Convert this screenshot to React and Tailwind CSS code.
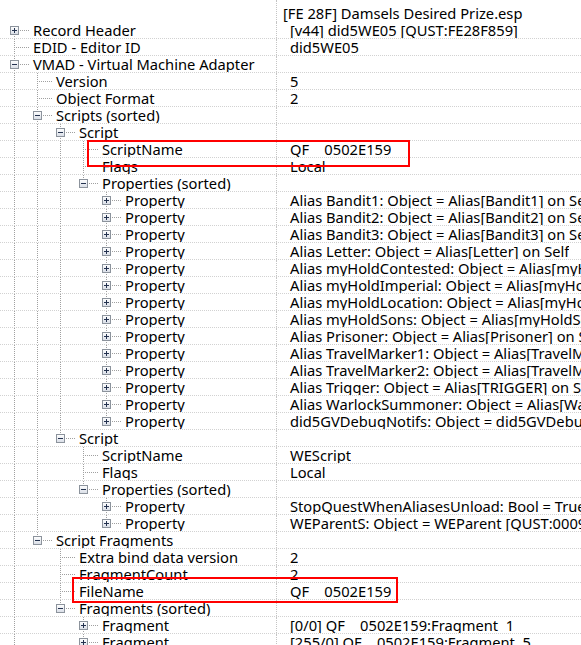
import React from 'react';

const INDENT = 23;
const ROW_H = 17;

const rawRows = [
  { level: 0, exp: '+', name: 'Record Header', value: '[v44] did5WE05 [QUST:FE28F859]' },
  { level: 0, name: 'EDID - Editor ID', value: 'did5WE05' },
  { level: 0, exp: '-', name: 'VMAD - Virtual Machine Adapter', value: '', more: true },
  { level: 1, name: 'Version', value: '5' },
  { level: 1, name: 'Object Format', value: '2' },
  { level: 1, exp: '-', name: 'Scripts (sorted)', value: '' },
  { level: 2, exp: '-', name: 'Script', value: '' },
  { level: 3, name: 'ScriptName', value: 'QF    0502E159' },
  { level: 3, name: 'Flags', value: 'Local' },
  { level: 3, exp: '-', name: 'Properties (sorted)', value: '' },
  { level: 4, exp: '+', name: 'Property', value: 'Alias Bandit1: Object = Alias[Bandit1] on Self' },
  { level: 4, exp: '+', name: 'Property', value: 'Alias Bandit2: Object = Alias[Bandit2] on Self' },
  { level: 4, exp: '+', name: 'Property', value: 'Alias Bandit3: Object = Alias[Bandit3] on Self' },
  { level: 4, exp: '+', name: 'Property', value: 'Alias Letter: Object = Alias[Letter] on Self' },
  { level: 4, exp: '+', name: 'Property', value: 'Alias myHoldContested: Object = Alias[myHoldContested] on Self' },
  { level: 4, exp: '+', name: 'Property', value: 'Alias myHoldImperial: Object = Alias[myHoldImperial] on Self' },
  { level: 4, exp: '+', name: 'Property', value: 'Alias myHoldLocation: Object = Alias[myHoldLocation] on Self' },
  { level: 4, exp: '+', name: 'Property', value: 'Alias myHoldSons: Object = Alias[myHoldSons] on Self' },
  { level: 4, exp: '+', name: 'Property', value: 'Alias Prisoner: Object = Alias[Prisoner] on Self' },
  { level: 4, exp: '+', name: 'Property', value: 'Alias TravelMarker1: Object = Alias[TravelMarker1] on Self' },
  { level: 4, exp: '+', name: 'Property', value: 'Alias TravelMarker2: Object = Alias[TravelMarker2] on Self' },
  { level: 4, exp: '+', name: 'Property', value: 'Alias Trigger: Object = Alias[TRIGGER] on Self' },
  { level: 4, exp: '+', name: 'Property', value: 'Alias WarlockSummoner: Object = Alias[WarlockSummoner] on Self' },
  { level: 4, exp: '+', name: 'Property', value: 'did5GVDebugNotifs: Object = did5GVDebugNotifs [GLOB:FE28F800]' },
  { level: 2, exp: '-', name: 'Script', value: '' },
  { level: 3, name: 'ScriptName', value: 'WEScript' },
  { level: 3, name: 'Flags', value: 'Local' },
  { level: 3, exp: '-', name: 'Properties (sorted)', value: '' },
  { level: 4, exp: '+', name: 'Property', value: 'StopQuestWhenAliasesUnload: Bool = True' },
  { level: 4, exp: '+', name: 'Property', value: 'WEParentS: Object = WEParent [QUST:0009E4AE]' },
  { level: 1, exp: '-', name: 'Script Fragments', value: '' },
  { level: 2, name: 'Extra bind data version', value: '2' },
  { level: 2, name: 'FragmentCount', value: '2' },
  { level: 2, name: 'FileName', value: 'QF    0502E159' },
  { level: 2, exp: '-', name: 'Fragments (sorted)', value: '' },
  { level: 3, exp: '+', name: 'Fragment', value: '[0/0] QF    0502E159:Fragment  1' },
  { level: 3, exp: '+', name: 'Fragment', value: '[255/0] QF    0502E159:Fragment  5' },
];

// work out which nodes have a sibling further down, and which ancestor lines run through each row
const rows = rawRows.map((r, i) => {
  let next = false;
  for (let j = i + 1; j < rawRows.length; j++) {
    if (rawRows[j].level < r.level) break;
    if (rawRows[j].level === r.level) {
      next = true;
      break;
    }
  }
  return { ...r, hasNext: !!r.more || next };
});

rows.forEach((r, i) => {
  const through = [];
  for (let k = 0; k < r.level; k++) {
    let anc = null;
    for (let j = i - 1; j >= 0; j--) {
      if (rows[j].level === k) {
        anc = rows[j];
        break;
      }
    }
    through.push(anc ? anc.hasNext : false);
  }
  r.through = through;
});

const cx = (level) => 14 + INDENT * level;

const TreeLines = ({ row, first }) => {
  const h = ROW_H - 1;
  const mid = 8;
  const width = 31 + INDENT * row.level;
  const c = cx(row.level);
  const line = { stroke: '#a0a0a0', strokeDasharray: '1 1', shapeRendering: 'crispEdges' };

  return (
    <svg width={width} height={h} className="shrink-0 block">
      {row.through.map((on, k) =>
        on ? <line key={k} x1={cx(k) + 0.5} y1={0} x2={cx(k) + 0.5} y2={h} {...line} /> : null
      )}
      <line x1={c + 0.5} y1={first ? mid : 0} x2={c + 0.5} y2={row.hasNext ? h : mid} {...line} />
      <line x1={c} y1={mid + 0.5} x2={width - 1} y2={mid + 0.5} {...line} />
      {row.exp && (
        <g shapeRendering="crispEdges">
          <defs>
            <linearGradient id="boxfill" x1="0" y1="0" x2="0" y2="1">
              <stop offset="0" stopColor="#ffffff" />
              <stop offset="1" stopColor="#d8dde6" />
            </linearGradient>
          </defs>
          <rect x={c - 4 + 0.5} y={mid - 4 + 0.5} width={8} height={8} fill="url(#boxfill)" stroke="#8c939c" />
          <line x1={c - 2} y1={mid + 0.5} x2={c + 3} y2={mid + 0.5} stroke="#24324f" />
          {row.exp === '+' && <line x1={c + 0.5} y1={mid - 2} x2={c + 0.5} y2={mid + 3} stroke="#24324f" />}
        </g>
      )}
    </svg>
  );
};

const App = () => {
  return (
    <div
      className="relative w-[581px] h-[645px] overflow-hidden bg-white text-[14.7px] text-black"
      style={{ fontFamily: '"Noto Sans", "Open Sans", sans-serif' }}
    >
      {/* header row */}
      <div className="flex h-[22px]">
        <div className="w-[277px] shrink-0 border-r border-dotted border-[#c4c4c4]" />
        <div className="pl-[6px] pt-[3px] leading-[20px] whitespace-nowrap">[FE 28F] Damsels Desired Prize.esp</div>
      </div>

      {rows.map((row, i) => (
        <div key={i} className="flex h-[17px] border-b border-dotted border-[#d2d2d2]">
          <div className="w-[277px] shrink-0 flex items-start border-r border-dotted border-[#c4c4c4] overflow-hidden">
            <TreeLines row={row} first={i === 0} />
            <span className="pl-[2px] leading-[16px] whitespace-nowrap">{row.name}</span>
          </div>
          <div className="pl-[13px] leading-[16px] whitespace-pre overflow-hidden">{row.value}</div>
        </div>
      ))}

      {/* highlight boxes */}
      <div className="absolute left-[87px] top-[140px] w-[323px] h-[27px] border-2 border-[#ff0000]" />
      <div className="absolute left-[72px] top-[577px] w-[326px] h-[26px] border-2 border-[#ff0000]" />
    </div>
  );
};

export default App;
